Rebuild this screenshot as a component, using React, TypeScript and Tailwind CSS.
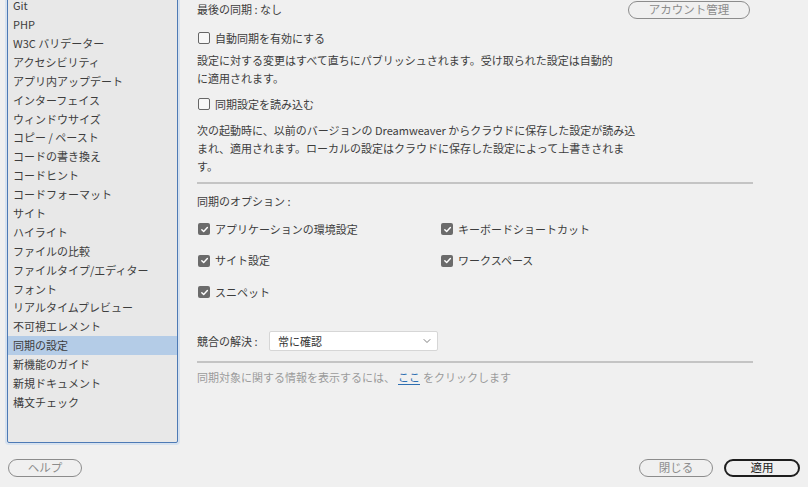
import { ChevronDown } from "lucide-react";

const categories = [
  "Git",
  "PHP",
  "W3C バリデーター",
  "アクセシビリティ",
  "アプリ内アップデート",
  "インターフェイス",
  "ウィンドウサイズ",
  "コピー / ペースト",
  "コードの書き換え",
  "コードヒント",
  "コードフォーマット",
  "サイト",
  "ハイライト",
  "ファイルの比較",
  "ファイルタイプ/エディター",
  "フォント",
  "リアルタイムプレビュー",
  "不可視エレメント",
  "同期の設定",
  "新機能のガイド",
  "新規ドキュメント",
  "構文チェック",
];

const selected = "同期の設定";

function Box({ checked }: { checked?: boolean }) {
  if (checked) {
    return (
      <span className="flex h-[12px] w-[12px] shrink-0 items-center justify-center rounded-[2px] bg-[#6b6b6b]">
        <svg width="9" height="9" viewBox="0 0 10 10" fill="none">
          <path d="M2 5.2 4.1 7.3 8.2 2.8" stroke="#fff" strokeWidth="1.6" strokeLinecap="round" strokeLinejoin="round" />
        </svg>
      </span>
    );
  }
  return <span className="h-[12px] w-[12px] shrink-0 rounded-[2px] border border-[#666] bg-[#f7f7f7]" />;
}

function Check({ label, checked }: { label: string; checked?: boolean }) {
  return (
    <label className="flex h-[16px] items-center gap-[5px] pl-[1px]">
      <Box checked={checked} />
      <span>{label}</span>
    </label>
  );
}

function PillButton({ children, strong, className = "" }: { children: React.ReactNode; strong?: boolean; className?: string }) {
  return (
    <button
      className={
        "flex h-[18px] items-center justify-center rounded-full text-[11.5px] leading-none " +
        (strong ? "border-2 border-[#1e1e1e] text-[#222] " : "border border-[#8c8c8c] text-[#8c8c8c] ") +
        className
      }
    >
      {children}
    </button>
  );
}

export default function App() {
  return (
    <div
      className="flex h-[487px] w-[808px] flex-col overflow-hidden bg-[#f0f0f0] text-[11px] text-[#3d3d3d]"
      style={{ fontFamily: '"Noto Sans CJK JP", "Noto Sans", sans-serif' }}
    >
      <div className="flex h-[443px] shrink-0">
        {/* category list, scrolled a little */}
        <div className="ml-[7px] mt-[-6px] h-[449px] w-[171px] shrink-0 overflow-hidden rounded-[2px] border border-[#4d7ab5] bg-[#e8e8e8] pt-[1px] shadow-[0_0_0_2px_rgba(140,185,235,0.25)]">
          {categories.map((c) => (
            <div
              key={c}
              className={"flex h-[18.9px] items-center px-[5px] " + (c === selected ? "bg-[#b4cce7]" : "")}
            >
              {c}
            </div>
          ))}
        </div>

        {/* settings */}
        <div className="ml-[19px] flex w-[556px] flex-col">
          <div className="mt-[1px] flex h-[18px] items-start justify-between pr-[3px]">
            <span className="leading-[16px]">最後の同期 : なし</span>
            <PillButton className="w-[122px]">アカウント管理</PillButton>
          </div>

          <div className="mt-[11px]">
            <Check label="自動同期を有効にする" />
          </div>
          <p className="mt-[6px] leading-[17.5px]">
            設定に対する変更はすべて直ちにパブリッシュされます。受け取られた設定は自動的
            <br />
            に適用されます。
          </p>

          <div className="mt-[9px]">
            <Check label="同期設定を読み込む" />
          </div>
          <p className="mt-[9px] leading-[18px]">
            次の起動時に、以前のバージョンの Dreamweaver からクラウドに保存した設定が読み込
            <br />
            まれ、適用されます。ローカルの設定はクラウドに保存した設定によって上書きされま
            <br />
            す。
          </p>

          <div className="mt-[7px] h-[2px] bg-[#c4c4c4]" />

          <div className="mt-[9px] leading-[16px]">同期のオプション :</div>
          <div className="mt-[12px] grid grid-cols-[243px_1fr] gap-y-[15.5px]">
            <Check label="アプリケーションの環境設定" checked />
            <Check label="キーボードショートカット" checked />
            <Check label="サイト設定" checked />
            <Check label="ワークスペース" checked />
            <Check label="スニペット" checked />
          </div>

          <div className="mt-[31px] flex items-center">
            <span className="w-[72px]">競合の解決 :</span>
            <div className="flex h-[20px] w-[169px] items-center justify-between rounded-[2px] border border-[#d6d6d6] bg-white pl-[8px] pr-[4px] text-[#333]">
              <span>常に確認</span>
              <ChevronDown size={12} strokeWidth={1.5} className="text-[#555]" />
            </div>
          </div>

          <div className="mt-[10px] h-[2px] bg-[#c4c4c4]" />

          <div className="mt-[6px] leading-[16px] text-[#9b9b9b]">
            同期対象に関する情報を表示するには、
            <a className="mx-[3px] text-[#2f6fb1] underline underline-offset-2">ここ</a>
            をクリックします
          </div>
        </div>
      </div>

      <div className="mt-[16px] flex items-center px-[8px]">
        <PillButton className="w-[74px]">ヘルプ</PillButton>
        <div className="flex-1" />
        <PillButton className="w-[74px]">閉じる</PillButton>
        <PillButton strong className="ml-[11px] w-[76px]">
          適用
        </PillButton>
      </div>
    </div>
  );
}
